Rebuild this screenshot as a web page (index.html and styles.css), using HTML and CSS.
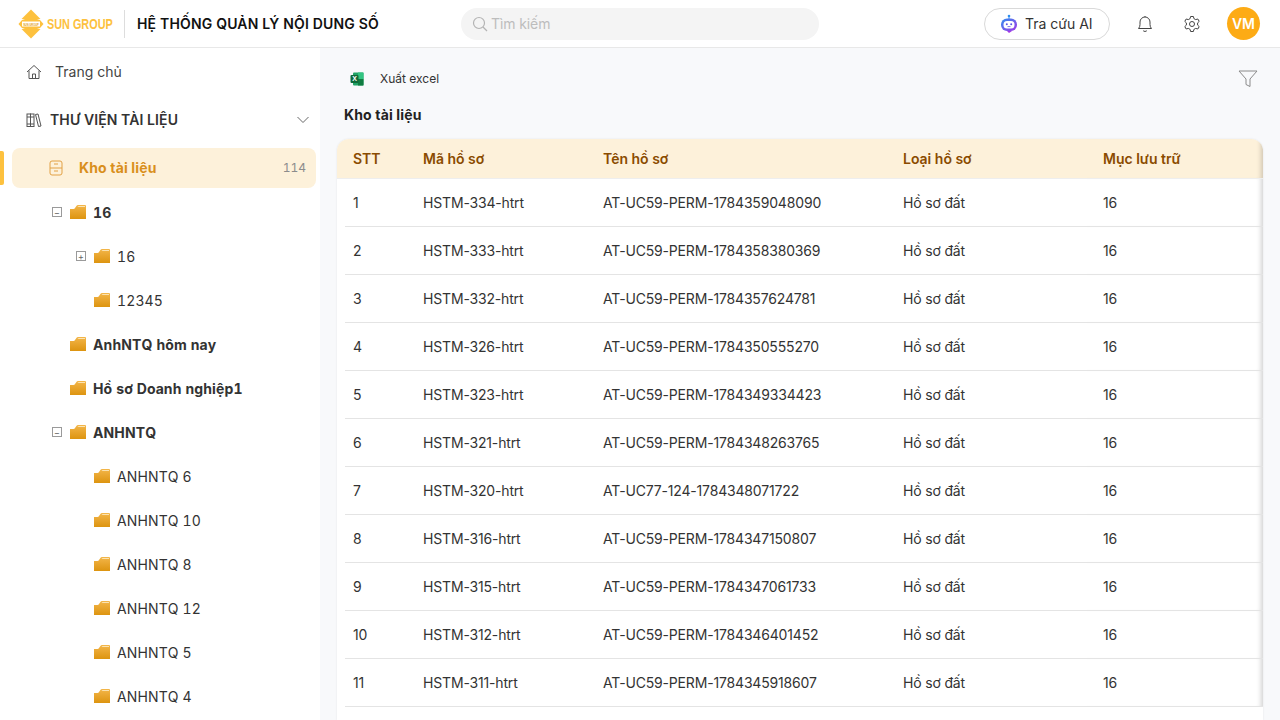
FILE: index.html
```html
<!DOCTYPE html>
<html>
<head>
  <meta charset="utf-8">
  <title>Hệ thống quản lý nội dung số</title>
  <link rel="stylesheet" href="styles.css">
</head>
<body>
  <svg class="defs" width="0" height="0">
    <defs>
      <linearGradient id="folderFill" x1="0" y1="0" x2="0" y2="1">
        <stop offset="0" stop-color="#f3b64a"/>
        <stop offset="1" stop-color="#dd9410"/>
      </linearGradient>
      <symbol id="folder" viewBox="0 0 16 14">
        <path d="M0 4 L0 14 L16 14 L16 1 Q16 0 15 0 L8 0 Q7 0 6.400 1 L5 3 Q4.500 4 3.500 4 Z" fill="url(#folderFill)"/>
        <path d="M7.500 2 L8.500 1 L15 1 L15 2 Z" fill="#fbe3b2"/>
      </symbol>
    </defs>
  </svg>

  <header class="topbar">
    <div class="brand">
      <svg class="brand-mark" width="26" height="30" viewBox="0 0 26 30">
        <path d="M13 0.500 L22.500 10 L3.500 10 Z" fill="#fdc13e"/>
        <path d="M13 29.500 L22.500 20 L3.500 20 Z" fill="#fdc13e"/>
        <path d="M4 11 Q13 7 22 11 L25.500 15 L22 19 Q13 23 4 19 L0.500 15 Z" fill="#fdc13e"/>
        <rect x="4" y="12.500" width="18" height="5" fill="#fff"/>
        <text x="13" y="16.700" class="brand-mini">SUN GROUP</text>
      </svg>
      <span class="brand-name">SUN GROUP</span>
    </div>
    <div class="brand-sep"></div>
    <div class="app-title">HỆ THỐNG QUẢN LÝ NỘI DUNG SỐ</div>
    <div class="search">
      <svg width="16" height="16" viewBox="0 0 16 16" fill="none" stroke="#b4b4b4" stroke-width="1.200"><circle cx="7" cy="7" r="5.500"/><path d="M11 11 L15 15"/></svg>
      <span>Tìm kiếm</span>
    </div>
    <div class="top-actions">
      <button class="ai-btn">
        <svg width="18" height="20" viewBox="0 0 18 20">
          <defs><linearGradient id="aiFill" x1="0" y1="0" x2="1" y2="1"><stop offset="0" stop-color="#2f8ff0"/><stop offset="1" stop-color="#a436e6"/></linearGradient></defs>
          <circle cx="9" cy="2" r="1.300" fill="#2f8ff0"/>
          <path d="M9 3 V5" stroke="#2f8ff0"/>
          <rect x="1" y="4.500" width="16" height="12.500" rx="6" fill="url(#aiFill)"/>
          <path d="M7 17 H12 L9 19 Z" fill="#a436e6"/>
          <rect x="3.500" y="7" width="11" height="7.500" rx="3.500" fill="#fff"/>
          <circle cx="6.800" cy="10.200" r="1" fill="#5a55e8"/>
          <circle cx="11.200" cy="10.200" r="1" fill="#5a55e8"/>
          <path d="M7.500 12.600 H10.500" stroke="#5a55e8" stroke-width=".8"/>
        </svg>
        <span>Tra cứu AI</span>
      </button>
      <svg class="top-icon bell" width="18" height="18" viewBox="0 0 18 18" fill="none" stroke="#444" stroke-width="1"><path d="M2.500 13.500 Q4 12 4 9.500 V7 A5 5 0 0 1 14 7 V9.500 Q14 12 15.500 13.500 Z"/><path d="M7.200 15.800 Q9 17.200 10.800 15.800"/><path d="M9 1 V2"/></svg>
      <svg class="top-icon gear" width="18" height="18" viewBox="0 0 18 18" fill="none" stroke="#444" stroke-width="1"><path d="M7.600 1.500 H10.400 L10.900 3.600 L12.700 4.600 L14.800 4 L16.200 6.400 L14.600 7.900 V10.100 L16.200 11.600 L14.800 14 L12.700 13.400 L10.900 14.400 L10.400 16.500 H7.600 L7.100 14.400 L5.300 13.400 L3.200 14 L1.800 11.600 L3.400 10.100 V7.900 L1.800 6.400 L3.200 4 L5.300 4.600 L7.100 3.600 Z" stroke-linejoin="round"/><circle cx="9" cy="9" r="2.500"/></svg>
      <div class="avatar">VM</div>
    </div>
  </header>

  <div class="layout">
    <aside class="sidebar">
      <div class="nav-item">
        <svg width="16" height="16" viewBox="0 0 16 16" fill="none" stroke="#555" stroke-width="1"><path d="M1 8 L8 1.500 L15 8"/><path d="M3 6.500 V14.500 H13 V6.500"/><path d="M6.500 14.500 V10 H9.500 V14.500"/></svg>
        <span>Trang chủ</span>
      </div>
      <div class="nav-group">
        <svg width="16" height="16" viewBox="0 0 16 16" fill="none" stroke="#555" stroke-width="1"><rect x="1" y="2" width="3.500" height="12.500"/><rect x="4.500" y="2" width="3.500" height="12.500"/><path d="M1 5 H8 M1 12 H8"/><path d="M9.500 2.500 L12 2 L15 14 L12.500 14.500 Z"/></svg>
        <span class="nav-group-label">THƯ VIỆN TÀI LIỆU</span>
        <svg class="chevron" width="12" height="8" viewBox="0 0 12 8" fill="none" stroke="#666" stroke-width="1"><path d="M0.500 1 L6 6.500 L11.500 1"/></svg>
      </div>
      <div class="nav-active-wrap">
        <div class="nav-marker"></div>
        <div class="nav-active">
          <svg width="14" height="16" viewBox="0 0 14 16" fill="none" stroke="#e2a145" stroke-width="1"><rect x="1" y="1" width="12" height="14" rx="2"/><path d="M1 8 H13 M5 4 H9 M5 11 H9"/></svg>
          <span class="nav-active-label">Kho tài liệu</span>
          <span class="count">114</span>
        </div>
      </div>

      <div class="tree">
        <div class="tree-row lvl-1 strong">
          <span class="toggle">−</span>
          <svg class="folder" width="16" height="14"><use href="#folder"/></svg>
          <span>16</span>
        </div>
        <div class="tree-row lvl-2">
          <span class="toggle">+</span>
          <svg class="folder" width="16" height="14"><use href="#folder"/></svg>
          <span>16</span>
        </div>
        <div class="tree-row lvl-2">
          <span class="toggle empty"></span>
          <svg class="folder" width="16" height="14"><use href="#folder"/></svg>
          <span>12345</span>
        </div>
        <div class="tree-row lvl-1 strong">
          <span class="toggle empty"></span>
          <svg class="folder" width="16" height="14"><use href="#folder"/></svg>
          <span>AnhNTQ hôm nay</span>
        </div>
        <div class="tree-row lvl-1 strong">
          <span class="toggle empty"></span>
          <svg class="folder" width="16" height="14"><use href="#folder"/></svg>
          <span>Hồ sơ Doanh nghiệp1</span>
        </div>
        <div class="tree-row lvl-1 strong">
          <span class="toggle">−</span>
          <svg class="folder" width="16" height="14"><use href="#folder"/></svg>
          <span>ANHNTQ</span>
        </div>
        <div class="tree-row lvl-2">
          <span class="toggle empty"></span>
          <svg class="folder" width="16" height="14"><use href="#folder"/></svg>
          <span>ANHNTQ 6</span>
        </div>
        <div class="tree-row lvl-2">
          <span class="toggle empty"></span>
          <svg class="folder" width="16" height="14"><use href="#folder"/></svg>
          <span>ANHNTQ 10</span>
        </div>
        <div class="tree-row lvl-2">
          <span class="toggle empty"></span>
          <svg class="folder" width="16" height="14"><use href="#folder"/></svg>
          <span>ANHNTQ 8</span>
        </div>
        <div class="tree-row lvl-2">
          <span class="toggle empty"></span>
          <svg class="folder" width="16" height="14"><use href="#folder"/></svg>
          <span>ANHNTQ 12</span>
        </div>
        <div class="tree-row lvl-2">
          <span class="toggle empty"></span>
          <svg class="folder" width="16" height="14"><use href="#folder"/></svg>
          <span>ANHNTQ 5</span>
        </div>
        <div class="tree-row lvl-2">
          <span class="toggle empty"></span>
          <svg class="folder" width="16" height="14"><use href="#folder"/></svg>
          <span>ANHNTQ 4</span>
        </div>
      </div>
    </aside>

    <main class="content">
      <div class="toolbar">
        <div class="export">
          <svg width="14" height="14" viewBox="0 0 14 14">
            <rect x="3" y="0.500" width="10.500" height="13" rx="1" fill="#21a366"/>
            <rect x="8" y="0.500" width="5.500" height="6.500" fill="#33c481"/>
            <rect x="8" y="7" width="5.500" height="6.500" fill="#107c41"/>
            <rect x="0.500" y="3" width="8" height="8" rx="1" fill="#0f6b3a"/>
            <text x="4.500" y="9.300" class="excel-x">X</text>
          </svg>
          <span>Xuất excel</span>
        </div>
        <svg width="20" height="18" viewBox="0 0 20 18" fill="none" stroke="#8a8a8a" stroke-width="1"><path d="M1 1 H19 L12 9 V16.500 L8 14.500 V9 Z" stroke-linejoin="round"/></svg>
      </div>
      <h2 class="page-title">Kho tài liệu</h2>
      <div class="table-card">
        <table class="doc-table">
          <colgroup>
            <col class="col-stt"><col class="col-code"><col class="col-name"><col class="col-type"><col>
          </colgroup>
          <thead>
            <tr><th>STT</th><th>Mã hồ sơ</th><th>Tên hồ sơ</th><th>Loại hồ sơ</th><th>Mục lưu trữ</th></tr>
          </thead>
          <tbody>
            <tr><td>1</td><td>HSTM-334-htrt</td><td>AT-UC59-PERM-1784359048090</td><td>Hồ sơ đất</td><td>16</td></tr>
            <tr><td>2</td><td>HSTM-333-htrt</td><td>AT-UC59-PERM-1784358380369</td><td>Hồ sơ đất</td><td>16</td></tr>
            <tr><td>3</td><td>HSTM-332-htrt</td><td>AT-UC59-PERM-1784357624781</td><td>Hồ sơ đất</td><td>16</td></tr>
            <tr><td>4</td><td>HSTM-326-htrt</td><td>AT-UC59-PERM-1784350555270</td><td>Hồ sơ đất</td><td>16</td></tr>
            <tr><td>5</td><td>HSTM-323-htrt</td><td>AT-UC59-PERM-1784349334423</td><td>Hồ sơ đất</td><td>16</td></tr>
            <tr><td>6</td><td>HSTM-321-htrt</td><td>AT-UC59-PERM-1784348263765</td><td>Hồ sơ đất</td><td>16</td></tr>
            <tr><td>7</td><td>HSTM-320-htrt</td><td>AT-UC77-124-1784348071722</td><td>Hồ sơ đất</td><td>16</td></tr>
            <tr><td>8</td><td>HSTM-316-htrt</td><td>AT-UC59-PERM-1784347150807</td><td>Hồ sơ đất</td><td>16</td></tr>
            <tr><td>9</td><td>HSTM-315-htrt</td><td>AT-UC59-PERM-1784347061733</td><td>Hồ sơ đất</td><td>16</td></tr>
            <tr><td>10</td><td>HSTM-312-htrt</td><td>AT-UC59-PERM-1784346401452</td><td>Hồ sơ đất</td><td>16</td></tr>
            <tr><td>11</td><td>HSTM-311-htrt</td><td>AT-UC59-PERM-1784345918607</td><td>Hồ sơ đất</td><td>16</td></tr>
          </tbody>
        </table>
      </div>
    </main>
  </div>
</body>
</html>
```

FILE: styles.css
```css
html, body {
  height: 100%;
}
body {
  font-family: Inter, "Noto Sans", sans-serif;
  margin: 0;
  background: #f8f9fb;
  color: #333;
  overflow: hidden;
}
.defs {
  display: block;
  height: 0;
}
.topbar {
  display: flex;
  align-items: center;
  height: 47px;
  background: #fff;
  border-bottom: 1px solid #e8e8e8;
  padding: 0 20px 0 18px;
}
.brand {
  display: flex;
  align-items: center;
  gap: 3px;
  width: 95px;
  overflow: hidden;
}
.brand-mark {
  flex: none;
}
.brand-mini {
  font-family: "Liberation Sans", sans-serif;
  font-size: 2.600px;
  font-weight: 700;
  text-anchor: middle;
  fill: #e0a020;
}
.brand-name {
  font-family: "Liberation Sans", sans-serif;
  font-size: 15.500px;
  font-weight: 700;
  color: #fdc13e;
  white-space: nowrap;
  transform: scaleX(0.7);
  transform-origin: left center;
}
.brand-sep {
  width: 1px;
  height: 28px;
  background: #ddd;
  margin: 0 12px 0 11px;
}
.app-title {
  font-size: 14px;
  font-weight: 600;
  letter-spacing: 0.18px;
  color: #111;
  width: 324px;
  white-space: nowrap;
}
.search {
  display: flex;
  align-items: center;
  gap: 3px;
  width: 358px;
  height: 32px;
  padding: 0 11px;
  box-sizing: border-box;
  background: #f4f4f4;
  border-radius: 16px;
  font-size: 14px;
  letter-spacing: -0.1px;
  color: #bdbdbd;
}
.top-actions {
  display: flex;
  align-items: center;
  margin-left: auto;
}
.ai-btn {
  display: flex;
  align-items: center;
  gap: 7px;
  width: 126px;
  height: 32px;
  padding: 0 15px;
  box-sizing: border-box;
  white-space: nowrap;
  background: #fff;
  border: 1px solid #d9d9d9;
  border-radius: 16px;
  font-family: inherit;
  font-size: 14px;
  color: #333;
}
.bell {
  margin-left: 26px;
}
.gear {
  margin-left: 29px;
}
.avatar {
  display: flex;
  align-items: center;
  justify-content: center;
  width: 33px;
  height: 33px;
  margin-left: 26px;
  border-radius: 50%;
  background: #fdab15;
  color: #fff;
  font-size: 14px;
  font-weight: 600;
}
.layout {
  display: flex;
  height: 672px;
}
.sidebar {
  width: 320px;
  flex: none;
  background: #fff;
  overflow: hidden;
  font-size: 14px;
  line-height: 20px;
}
.nav-item,
.nav-group {
  display: flex;
  align-items: center;
  height: 48px;
  padding-left: 26px;
}
.nav-item span {
  margin-left: 13px;
  color: #444;
}
.nav-group-label {
  margin-left: 8px;
  font-weight: 600;
  letter-spacing: 0.1px;
  color: #333;
}
.chevron {
  margin-left: auto;
  margin-right: 11px;
}
.nav-active-wrap {
  display: flex;
  align-items: center;
  height: 40px;
  margin-top: 4px;
}
.nav-marker {
  width: 4px;
  height: 34px;
  background: #fdc13e;
  border-radius: 0 2px 2px 0;
}
.nav-active {
  display: flex;
  align-items: center;
  width: 304px;
  height: 40px;
  margin-left: 8px;
  padding: 0 10px 0 37px;
  box-sizing: border-box;
  background: #fdf1da;
  border-radius: 8px;
}
.nav-active-label {
  margin-left: 16px;
  font-weight: 700;
  letter-spacing: 0.15px;
  color: #d98f1c;
}
.count {
  margin-left: auto;
  font-size: 12px;
  font-variant-numeric: tabular-nums;
  color: #8c8c8c;
}
.tree {
  margin-top: 2px;
  line-height: normal;
  font-variant-numeric: tabular-nums;
  font-kerning: none;
  letter-spacing: 0.12px;
}
.tree-row {
  display: flex;
  align-items: center;
  height: 44px;
  color: #333;
}
.tree-row.lvl-1 {
  padding-left: 52px;
}
.tree-row.lvl-2 {
  padding-left: 76px;
}
.tree-row.strong {
  font-weight: 700;
}
.toggle {
  display: flex;
  align-items: center;
  justify-content: center;
  width: 8px;
  height: 8px;
  border: 1px solid #9a9a9a;
  font-size: 9px;
  font-weight: 400;
  line-height: 1;
  color: #666;
  flex: none;
}
.toggle.empty {
  border-color: transparent;
}
.folder {
  margin-left: 8px;
  margin-right: 7px;
  flex: none;
}
.content {
  display: flex;
  flex-direction: column;
  flex: 1;
  min-width: 0;
  padding: 0 17px;
}
.toolbar {
  display: flex;
  align-items: center;
  justify-content: space-between;
  flex: none;
  height: 61px;
  padding: 0 5px 0 13px;
}
.export {
  display: flex;
  align-items: center;
  gap: 16px;
  font-size: 12px;
  line-height: 16px;
  color: #333;
}
.excel-x {
  font-family: "Liberation Sans", sans-serif;
  font-size: 7px;
  font-weight: 700;
  text-anchor: middle;
  fill: #fff;
}
.page-title {
  flex: none;
  margin: 0 0 0 7px;
  height: 30px;
  line-height: 12px;
  font-size: 14px;
  font-weight: 700;
  letter-spacing: 0.15px;
  color: #222;
}
.table-card {
  flex: 1;
  background: #fff;
  border-radius: 12px 12px 0 0;
  box-shadow: 0 0 2px rgba(0, 0, 0, 0.1);
  overflow: hidden;
}
.doc-table {
  width: 100%;
  table-layout: fixed;
  border-collapse: separate;
  border-spacing: 0;
  font-size: 14px;
  line-height: 20px;
}
.col-stt { width: 70px; }
.col-code { width: 180px; }
.col-name { width: 300px; }
.col-type { width: 200px; }
.doc-table th {
  height: 40px;
  padding: 0 16px;
  background: #fdf1da;
  border-bottom: 1px solid #eee;
  box-sizing: border-box;
  text-align: left;
  font-weight: 600;
  color: #8a4b00;
}
.doc-table td {
  height: 48px;
  padding: 0 16px;
  box-sizing: border-box;
  border-bottom: 1px solid #e4e4e4;
  color: #333;
  white-space: nowrap;
  letter-spacing: -0.17px;
}
/* row lines start 8px in from the card edge */
.doc-table td:first-child {
  border-bottom: none;
  background: linear-gradient(#e4e4e4, #e4e4e4) no-repeat 8px 100% / calc(100% - 8px) 1px;
}
/* fixed-column shadow on the right edge */
.doc-table th:last-child,
.doc-table td:last-child {
  box-shadow: inset -6px 0 5px -4px rgba(0, 0, 0, 0.18);
}
```
